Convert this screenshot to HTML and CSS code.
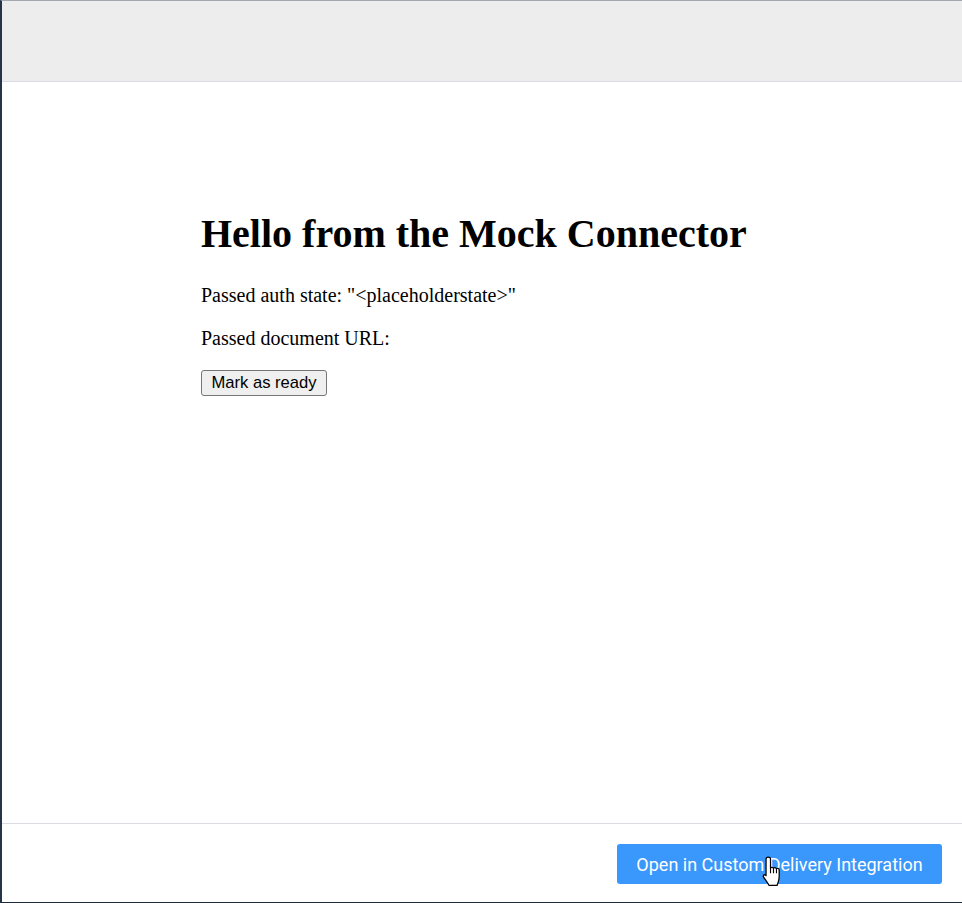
FILE: index.html
```html
<!DOCTYPE html>
<html>
<head>
<meta charset="utf-8">
<link rel="stylesheet" href="styles.css">
</head>
<body>
<div class="frame">
  <header class="topbar"></header>
  <main class="content">
    <h1 class="title">Hello from the Mock Connector</h1>
    <p class="line">Passed auth state: "&lt;placeholderstate&gt;"</p>
    <p class="line">Passed document URL: </p>
    <div class="actions"><button class="ready-btn" type="button">Mark as ready</button></div>
  </main>
  <footer class="footer">
    <button class="open-btn" type="button">Open in Custom Delivery Integration</button>
  </footer>
  <svg class="cursor" width="20" height="31" viewBox="0 0 16 25" aria-hidden="true">
    <path d="M5,1 C6,1 6.8,1.7 6.8,2.7 L6.8,9.6 C7.2,8.9 8.8,8.9 9.2,9.9 C9.6,9.1 11.2,9.1 11.6,10.3 C12,9.7 13.6,9.9 13.8,11.1 L13.8,16.6 C13.8,19.6 12.8,21.6 12.2,23.6 L5.5,23.6 C4.5,21.6 2.5,19.1 1.2,17.1 C0.5,15.9 1.5,14.6 2.8,15.4 L3.2,15.9 L3.2,2.7 C3.2,1.7 4,1 5,1 Z" fill="#fff" stroke="#000" stroke-width="1" stroke-linejoin="round"/>
    <path d="M6.8,9.6 L6.8,14 M9.2,9.9 L9.2,14 M11.6,10.3 L11.6,14" stroke="#000" stroke-width="0.9" fill="none"/>
  </svg>
</div>
</body>
</html>
```
FILE: styles.css
```css
html, body {
  margin: 0;
  padding: 0;
  background: #ffffff;
}

.frame {
  position: relative;
  width: 960px;
  height: 901px;
  border-top: 1px solid #a3a7ae;
  border-left: 2px solid #263447;
  border-bottom: 1px solid #1f2b3a;
  display: flex;
  flex-direction: column;
  background: #ffffff;
}

.topbar {
  height: 80px;
  background: #ededed;
  border-bottom: 1px solid #dcdbe1;
  flex: none;
}

.content {
  flex: 1;
  padding: 128px 0 0 199px;
  font-family: "Liberation Serif", "Times New Roman", serif;
  color: #000;
}

.title {
  margin: 0 0 27px;
  font-size: 40px;
  font-weight: bold;
  line-height: normal;
}

.line {
  margin: 0 0 20px;
  font-size: 20px;
  line-height: 23px;
}

.actions {
  margin-top: 19px;
}

.ready-btn {
  font-family: "Liberation Sans", Arial, sans-serif;
  font-size: 16.6px;
  height: 26px;
  width: 126px;
  padding: 0;
  line-height: 20px;
  background: #efefef;
  border: 1px solid #767676;
  border-radius: 3px;
  color: #000;
}

.footer {
  height: 79px;
  flex: none;
  border-top: 1px solid #dcdbe1;
  display: flex;
  justify-content: flex-end;
  align-items: flex-start;
  padding: 20px 20px 0 0;
  box-sizing: border-box;
}

.open-btn {
  height: 40px;
  width: 325px;
  background: #3a97fc;
  color: #ffffff;
  border: none;
  border-radius: 3px;
  font-family: Roboto, "Noto Sans", sans-serif;
  font-size: 18px;
  padding: 0;
}

.cursor {
  position: absolute;
  left: 760px;
  top: 855px;
}
```
